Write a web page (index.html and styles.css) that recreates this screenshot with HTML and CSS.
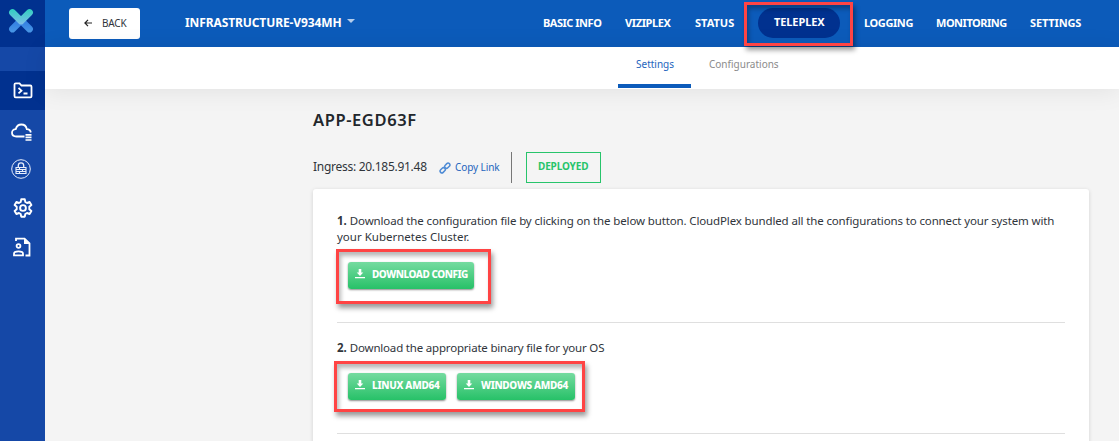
FILE: index.html
```html
<!DOCTYPE html>
<html lang="en">
<head>
<meta charset="utf-8">
<title>Teleplex</title>
<link rel="stylesheet" href="styles.css">
</head>
<body>
<div class="app">
  <aside class="sidebar">
    <div class="logo">
      <svg width="27" height="26" viewBox="0 0 27 26" fill="none" stroke-linecap="round" stroke-width="6.800">
        <defs>
          <linearGradient id="lower" x1="0" y1="12" x2="0" y2="25" gradientUnits="userSpaceOnUse"><stop stop-color="#2f7be0"/><stop offset="1" stop-color="#4a98e6"/></linearGradient>
          <linearGradient id="upper" x1="0" y1="1" x2="0" y2="17" gradientUnits="userSpaceOnUse"><stop stop-color="#2fd0bf"/><stop offset="1" stop-color="#82bdec"/></linearGradient>
        </defs>
        <path d="M4.500 21 13 12.500 21.500 21" stroke="url(#lower)" stroke-linejoin="round"/>
        <path d="M4.500 4.500 13 13 21.500 4.500" stroke="url(#upper)" stroke-linejoin="round"/>
      </svg>
    </div>
    <nav class="side-nav">
      <a class="side-item active"><svg width="20" height="17" viewBox="0 0 20 17" fill="none" stroke="#fff" stroke-width="1.800"><path d="M1.500 14V2.500Q1.500 1.300 2.700 1.300H6.500L8.500 3.500H17.300Q18.500 3.500 18.500 4.700V14.200Q18.500 15.400 17.300 15.400H2.700Q1.500 15.400 1.500 14Z"/><path d="m5.500 6 3 2.700-3 2.700M10.500 11.500h4"/></svg></a>
      <a class="side-item cloud"><svg width="21" height="18" viewBox="0 0 21 18" fill="none" stroke="#fff" stroke-width="1.800"><path d="M13.500 13.500H5.500C2.800 13.500 1 12 1 9.800S2.800 6.200 4.700 6.200C5.500 3.400 7.600 1.500 10.300 1.500c2.800 0 5 1.800 5.500 4.600 2 0 3.700 1.300 4 3.400"/><path d="M14.500 11.800h6M14.500 14.400h6M14.500 17h6" stroke-width="1.700"/></svg></a>
      <a class="side-item lock"><svg width="20" height="20" viewBox="0 0 20 20" fill="none" stroke="#e8eefb"><circle cx="10" cy="10" r="9.300"/><path d="M7.300 8V6.500a2.700 2.700 0 0 1 5.400 0V8" stroke-width="1.300"/><path d="M5 8.500h10v6H5zM5 10.500h10M5 12.500h10M8.500 8.500v2M11.500 10.500v2M8.500 12.500v2" stroke-width="1.100"/></svg></a>
      <a class="side-item"><svg width="20" height="20" viewBox="0 0 20 20" fill="none" stroke="#fff" stroke-width="1.900" stroke-linejoin="round"><path d="M8.200 1.300h3.600l.5 2.700 1.700 1 2.600-1 1.800 3-2.100 1.800v2.400l2.100 1.800-1.800 3-2.600-1-1.700 1-.5 2.700H8.200L7.700 16 6 15l-2.600 1-1.800-3 2.100-1.800V8.800L1.600 7l1.800-3L6 5l1.700-1z"/><circle cx="10" cy="10" r="2.900"/></svg></a>
      <a class="side-item user"><svg width="20" height="20" viewBox="0 0 20 20" fill="none" stroke="#fff" stroke-width="1.800"><path d="M4 4V1.600H12.500L17.500 6.500V18.500H13.500"/><path d="M12 1.500V7h5.500Z" fill="#fff" stroke="none"/><circle cx="6.500" cy="9" r="1.900"/><path d="M2 18.400v-1.700c0-3.200 9-3.200 9 0v1.700Z"/></svg></a>
    </nav>
  </aside>
  <div class="page">
    <header class="topbar">
      <button class="back"><svg width="8" height="8" viewBox="0 0 8 8" fill="none" stroke="#222" stroke-width="1.200"><path d="M4 .8.900 4 4 7.200M1 4h7"/></svg><span>BACK</span></button>
      <div class="project"><span>INFRASTRUCTURE-V934MH</span><i class="caret"></i></div>
      <nav class="menu">
        <a class="m1">BASIC INFO</a><a class="m2">VIZIPLEX</a><a class="m3">STATUS</a><a class="pill">TELEPLEX</a><a class="m5">LOGGING</a><a class="m6">MONITORING</a><a class="m7">SETTINGS</a>
      </nav>
    </header>
    <div class="tabs"><a class="tab selected">Settings</a><a class="tab">Configurations</a></div>
    <main class="content">
      <h1>APP-EGD63F</h1>
      <div class="meta">
        <span class="ingress">Ingress: 20.185.91.48</span>
        <a class="copy"><svg width="12" height="12" viewBox="0 0 12 12" fill="none" stroke="#4e8bd5" stroke-width="1.500"><rect x="-2.900" y="-1.800" width="5.800" height="3.600" rx="1.800" transform="translate(8.300 3.700) rotate(-45)"/><rect x="-2.900" y="-1.800" width="5.800" height="3.600" rx="1.800" transform="translate(3.700 8.300) rotate(-45)"/></svg><span>Copy Link</span></a>
        <span class="status">DEPLOYED</span>
      </div>
      <section class="card">
        <div class="step first">
          <p><b>1.</b> <span class="line1">Download the configuration file by clicking on the below button. CloudPlex bundled all the configurations to connect your system with</span><br><span class="line2">your Kubernetes Cluster.</span></p>
          <div class="actions"><button class="download cfg"><svg width="10" height="10" viewBox="0 0 10 10" fill="#fff"><path d="M3.700 0h2.600v3.500h2L5 6.900 1.700 3.500h2zM0 8h10v1.300H0z"/></svg><span>DOWNLOAD CONFIG</span></button></div>
        </div>
        <div class="step second">
          <p><b>2.</b> <span class="line3">Download the appropriate binary file for your OS</span></p>
          <div class="actions"><button class="download lin"><svg width="10" height="10" viewBox="0 0 10 10" fill="#fff"><path d="M3.700 0h2.600v3.500h2L5 6.900 1.700 3.500h2zM0 8h10v1.300H0z"/></svg><span>LINUX AMD64</span></button><button class="download win"><svg width="10" height="10" viewBox="0 0 10 10" fill="#fff"><path d="M3.700 0h2.600v3.500h2L5 6.900 1.700 3.500h2zM0 8h10v1.300H0z"/></svg><span>WINDOWS AMD64</span></button></div>
        </div>
      </section>
    </main>
  </div>
</div>
<div class="mark mark-menu"></div>
<div class="mark mark-config"></div>
<div class="mark mark-os"></div>
</body>
</html>
```
FILE: styles.css
```css
* { box-sizing: border-box; }
body { margin: 0; height: 441px; overflow: hidden; font-family: "Noto Sans", sans-serif; color: #30353b; }
button { font: inherit; border: 0; margin: 0; padding: 0; }
h1, p { margin: 0; }
p, span, a { white-space: nowrap; }
svg { display: block; flex: none; }
.app { display: flex; height: 441px; }
.sidebar { width: 45px; flex: none; background: #1548a7; }
.logo { height: 47px; background: #01318f; padding: 8px 0 0 8px; }
.side-nav { padding-top: 24px; }
.side-item { display: flex; height: 39px; align-items: center; justify-content: center; }
.side-item.active { background: #01318f; }
.side-item.cloud { padding: 4px 2px 0 0; }
.side-item.lock { padding-right: 4px; }
.side-item.user { padding-right: 2px; }
.page { flex: 1; min-width: 0; display: flex; flex-direction: column; background: #f4f4f4; }
.topbar { height: 47px; flex: none; background: #0c5bba; display: flex; align-items: center; padding-left: 24px; color: #fff; }
.back { width: 71px; height: 31px; background: #fff; border-radius: 3px; display: flex; align-items: center; padding: 0 0 2px 15px; gap: 10px; color: #30353b; font-size: 10px; letter-spacing: -.2px; }
.project { flex: none; width: 358px; padding: 0 0 2px 45px; display: flex; align-items: center; gap: 5px; font-size: 12px; font-weight: 700; letter-spacing: -.1px; }
.caret { border: 4px solid transparent; border-top-color: #b4cdec; border-bottom: 0; margin-top: -3px; }
.menu { display: flex; align-items: center; font-size: 11px; font-weight: 700; margin-left: 45px; padding-bottom: 2px; }
.menu a { flex: none; }
.m1 { width: 82px; letter-spacing: -.48px; }
.m2 { width: 70px; letter-spacing: -.38px; }
.m3 { width: 63px; }
.m5 { width: 72px; letter-spacing: -.4px; }
.m6 { width: 94px; letter-spacing: -.48px; }
.m7 { letter-spacing: -.15px; }
.menu .pill { width: 82px; height: 30px; line-height: 28px; border-radius: 15px; padding-left: 16px; margin-right: 24px; background: #01318f; letter-spacing: -.1px; }
.tabs { height: 42px; flex: none; background: #fff; display: flex; padding-left: 573px; box-shadow: 0 2px 24px rgba(0,0,0,.08); font-size: 10px; color: #8b8b8b; }
.tab { width: 73px; height: 41px; padding: 10px 0 0 18px; }
.tab.selected { color: #2465bd; border-bottom: 4px solid #0c5bba; }
.content { padding: 20px 30px 0 268px; }
h1 { font-size: 16.5px; line-height: 22px; font-weight: 600; color: #22272c; letter-spacing: .6px; }
.meta { display: flex; margin-top: 21px; height: 31px; align-items: center; font-size: 12px; }
.ingress { width: 126px; padding-bottom: 2px; letter-spacing: -.28px; }
.copy { display: flex; align-items: center; gap: 4px; width: 73px; height: 31px; border-right: 1px solid #777; color: #2465bd; font-size: 10px; letter-spacing: -.1px; }
.copy span { padding-bottom: 2px; }
.status { margin-left: 14px; width: 75px; height: 31px; border: 1px solid #27c46b; color: #27c46b; font-size: 10px; font-weight: 700; line-height: 27px; padding-left: 11px; letter-spacing: -.15px; }
.card { background: #fff; margin-top: 6px; height: 260px; padding: 24px 24px 0; border-radius: 3px; box-shadow: 0 1px 4px rgba(0,0,0,.14); font-size: 11.5px; line-height: 16px; }
.line1 { letter-spacing: -.135px; }
.line3 { letter-spacing: -.19px; }
.step { border-bottom: 1px solid #dfdfdf; }
.step.first { height: 110px; }
.step.second { height: 111px; padding-top: 17px; }
.actions { display: flex; gap: 11px; padding: 17px 0 0 11px; }
.download { height: 27px; border-radius: 3px; background: linear-gradient(#75dba0, #27c168); box-shadow: 0 1px 2px rgba(0,0,0,.45); display: flex; align-items: center; padding: 0 0 3px 7px; gap: 7px; color: #fff; font-size: 10px; font-weight: 800; }
.cfg { width: 126px; letter-spacing: -.47px; }
.lin { width: 98px; letter-spacing: -.3px; }
.win { width: 118px; letter-spacing: -.33px; }
.mark { position: absolute; border: 3px solid #ff4444; box-shadow: 2px 4px 5px rgba(0,0,0,.4), inset 2px 4px 4px rgba(0,0,0,.28); }
.mark-menu { left: 744px; top: 2px; width: 109px; height: 44px; }
.mark-config { left: 336px; top: 249px; width: 155px; height: 55px; }
.mark-os { left: 334px; top: 361px; width: 251px; height: 51px; }
```
